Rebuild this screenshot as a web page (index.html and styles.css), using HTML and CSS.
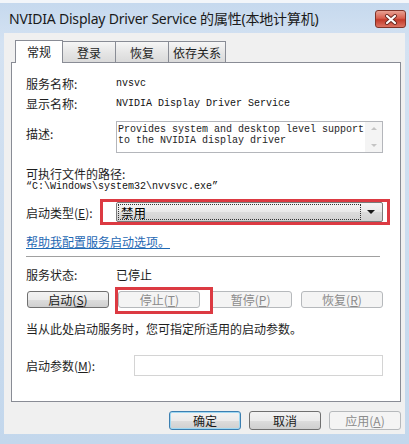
FILE: index.html
```html
<!DOCTYPE html>
<html lang="zh-CN">
<head>
  <meta charset="UTF-8" />
  <title>NVIDIA Display Driver Service 的属性</title>
  <link rel="stylesheet" href="styles.css">
</head>
<body>
  <div class="window">
    <div class="titlebar">
      <span class="title">NVIDIA Display Driver Service 的属性(本地计算机)</span>
      <span class="close">
        <svg width="14" height="11" viewBox="0 0 14 11">
          <path d="M3 2 L11 9 M11 2 L3 9" stroke="#6b2a22" stroke-width="4" stroke-linecap="round"/>
          <path d="M3 2 L11 9 M11 2 L3 9" stroke="#fff" stroke-width="2.2" stroke-linecap="round"/>
        </svg>
      </span>
    </div>

    <div class="client">
      <div class="tabs">
        <div class="tab active">常规</div>
        <div class="tab">登录</div>
        <div class="tab">恢复</div>
        <div class="tab">依存关系</div>
      </div>

      <div class="panel">
        <div class="row r-name">
          <span class="label">服务名称:</span>
          <span class="mono">nvsvc</span>
        </div>
        <div class="row r-display">
          <span class="label">显示名称:</span>
          <span class="mono">NVIDIA Display Driver Service</span>
        </div>
        <div class="row r-desc">
          <span class="label label-top">描述:</span>
          <div class="desc">
            <div class="desc-text">Provides system and desktop level support<br>to the NVIDIA display driver</div>
            <div class="scroll">
              <span class="arrow up"></span>
              <span class="arrow down"></span>
            </div>
          </div>
        </div>
        <div class="row r-pathlabel">可执行文件的路径:</div>
        <div class="row r-path mono">“C:\Windows\system32\nvvsvc.exe”</div>
        <div class="row r-type">
          <span class="label">启动类型(<u>E</u>):</span>
          <div class="combo marked">
            <span class="combo-value">禁用</span>
            <span class="combo-arrow"></span>
          </div>
        </div>
        <div class="row r-link"><a class="link" href="#">帮助我配置服务启动选项。</a></div>
        <div class="sep"></div>
        <div class="row r-status">
          <span class="label">服务状态:</span>
          <span>已停止</span>
        </div>
        <div class="row r-buttons">
          <button class="btn">启动(<u>S</u>)</button>
          <span class="marked btn-mark"><button class="btn" disabled>停止(<u>T</u>)</button></span>
          <button class="btn" disabled>暂停(<u>P</u>)</button>
          <button class="btn" disabled>恢复(<u>R</u>)</button>
        </div>
        <div class="row r-hint">当从此处启动服务时，您可指定所适用的启动参数。</div>
        <div class="row r-params">
          <span class="label label-wide">启动参数(<u>M</u>):</span>
          <div class="field"></div>
        </div>
      </div>

      <div class="dialog-buttons">
        <button class="btn default">确定</button>
        <button class="btn">取消</button>
        <button class="btn" disabled>应用(<u>A</u>)</button>
      </div>
    </div>
    <div class="frame-bottom"></div>
  </div>
</body>
</html>
```

FILE: styles.css
```css
body {
  margin: 0;
  background: #fff;
  font-family: "Noto Sans CJK SC", sans-serif;
  font-size: 12px;
  color: #1e1e1e;
}

.window {
  width: 409px;
  height: 444px;
  border-top: 3px solid #f3f6fa;
  box-sizing: border-box;
  background: linear-gradient(to bottom, #c6d9ee, #d4e2f2 40px, #c3d7ec);
}

.titlebar {
  height: 30px;
  display: flex;
  align-items: center;
  justify-content: space-between;
  padding: 0 3px 0 9px;
}

.title {
  font-family: "Noto Sans", "Noto Sans CJK SC", sans-serif;
  font-size: 14px;
  color: #1a1a1a;
  letter-spacing: -0.2px;
}

.close {
  width: 29px;
  height: 16px;
  border: 1px solid #7f3328;
  border-radius: 3px;
  background: linear-gradient(to bottom, #e8a294, #d8604f 45%, #c23a2a 55%, #dc7363);
  display: flex;
  align-items: center;
  justify-content: center;
  margin-top: 2px;
}

.client {
  height: 401px;
  margin: 0 4px;
  background: #f0f0f0;
  box-sizing: border-box;
  padding-top: 6px;
}

.frame-bottom {
  height: 10px;
}

/* onglets */
.tabs {
  display: flex;
  align-items: flex-end;
  height: 23px;
  margin-left: 11px;
}

.tab {
  height: 20px;
  min-width: 44px;
  padding: 0 4px;
  box-sizing: content-box;
  border: 1px solid #898c95;
  border-bottom: none;
  margin-left: -1px;
  background: linear-gradient(to bottom, #f6f6f6, #e6e6e6 50%, #dadada);
  display: flex;
  align-items: center;
  justify-content: center;
  font-size: 12px;
}

.tab.active {
  height: 23px;
  width: 48px;
  min-width: 0;
  margin-left: 0;
  margin-bottom: -1px;
  background: #fff;
  position: relative;
  z-index: 1;
  padding-bottom: 1px;
  box-sizing: border-box;
  align-items: flex-start;
  padding-top: 2px;
}

.panel {
  margin-left: 7px;
  width: 390px;
  height: 340px;
  box-sizing: border-box;
  border: 1px solid #898c95;
  background: #fff;
  padding: 12px 17px 0 14px;
}

.row {
  display: flex;
  align-items: center;
}

.label {
  width: 90px;
  flex-shrink: 0;
}

.label-top {
  align-self: flex-start;
  padding-top: 4px;
}

.label-wide {
  width: 108px;
}

.mono {
  font-family: "Liberation Mono", monospace;
  font-size: 10px;
  color: #111;
}

.r-name { height: 16px; }
.r-display { height: 16px; margin-top: 4px; }
.r-desc { margin-top: 10px; align-items: flex-start; }
.r-pathlabel { height: 14px; margin-top: 13px; }
.r-path { height: 13px; }
.r-type { height: 26px; margin-top: 6px; }
.r-link { height: 14px; margin-top: 9px; }
.r-status { height: 16px; margin-top: 8px; }
.r-buttons { height: 17px; margin-top: 9px; justify-content: space-between; padding-left: 1px; }
.r-hint { height: 16px; margin-top: 12px; }
.r-params { height: 21px; margin-top: 19px; }

.desc {
  flex: 1;
  height: 32px;
  border: 1px solid #b4b6bb;
  box-sizing: border-box;
  display: flex;
}

.desc-text {
  flex: 1;
  font-family: "Liberation Mono", monospace;
  font-size: 10px;
  line-height: 11px;
  padding: 2px 0 0 1px;
  white-space: nowrap;
}

.scroll {
  width: 17px;
  background: #f4f4f4;
  display: flex;
  flex-direction: column;
  justify-content: space-between;
  align-items: center;
  padding: 5px 0 5px;
}

.arrow {
  width: 0;
  height: 0;
  border-left: 3px solid transparent;
  border-right: 3px solid transparent;
}

.arrow.up { border-bottom: 3px solid #c4c4c4; }
.arrow.down { border-top: 3px solid #c4c4c4; }

.combo {
  flex: 1;
  height: 20px;
  box-sizing: border-box;
  border: 1px solid #7a7a7a;
  border-radius: 2px;
  background: linear-gradient(to bottom, #f4f4f4, #e9e9e9 50%, #dcdcdc 51%, #d2d2d2);
  display: flex;
  align-items: stretch;
  padding: 1px;
}

.combo-value {
  flex: 1;
  border: 1px dotted #333;
  padding-left: 2px;
  display: flex;
  align-items: center;
  font-size: 12.5px;
  color: #000;
}

.combo-arrow {
  width: 20px;
  display: flex;
  align-items: center;
  justify-content: center;
}

.combo-arrow::before {
  content: "";
  border-left: 4px solid transparent;
  border-right: 4px solid transparent;
  border-top: 4px solid #1a1a1a;
}

/* encadrés rouges posés par-dessus */
.marked {
  position: relative;
}

.marked::after {
  content: "";
  position: absolute;
  border: 3px solid #dc3a42;
  pointer-events: none;
}

.combo.marked::after {
  top: -4px;
  bottom: -4px;
  left: -17px;
  right: -8px;
}

.btn-mark {
  display: flex;
}

.btn-mark::after {
  top: -4px;
  bottom: -6px;
  left: -3px;
  right: -13px;
}

.link {
  color: #1f69b4;
  text-decoration: underline;
}

.sep {
  margin-top: 8px;
  height: 0;
  border-top: 1px solid #a0a0a0;
  border-bottom: 1px solid #fff;
  margin-right: 3px;
}

.btn {
  width: 82px;
  height: 17px;
  padding: 0;
  font-family: "Noto Sans CJK SC", sans-serif;
  font-size: 12px;
  color: #1a1a1a;
  border: 1px solid #707070;
  border-radius: 3px;
  background: linear-gradient(to bottom, #f3f3f3, #ebebeb 50%, #dddddd 51%, #cfcfcf);
  display: flex;
  align-items: center;
  justify-content: center;
  line-height: 1;
}

.btn:disabled {
  color: #8b8b8b;
  border-color: #b6b9bc;
  background: #f4f4f4;
}

.field {
  flex: 1;
  height: 21px;
  box-sizing: border-box;
  border: 1px solid #d4d4d4;
  background: #fff;
}

.dialog-buttons {
  display: flex;
  justify-content: flex-end;
  gap: 8px;
  margin-top: 9px;
  padding-right: 4px;
}

.dialog-buttons .btn {
  width: 72px;
  height: 19px;
}

.btn.default {
  border-color: #3c7fb1;
  box-shadow: inset 0 0 0 1px #9fd8f2;
}
```
